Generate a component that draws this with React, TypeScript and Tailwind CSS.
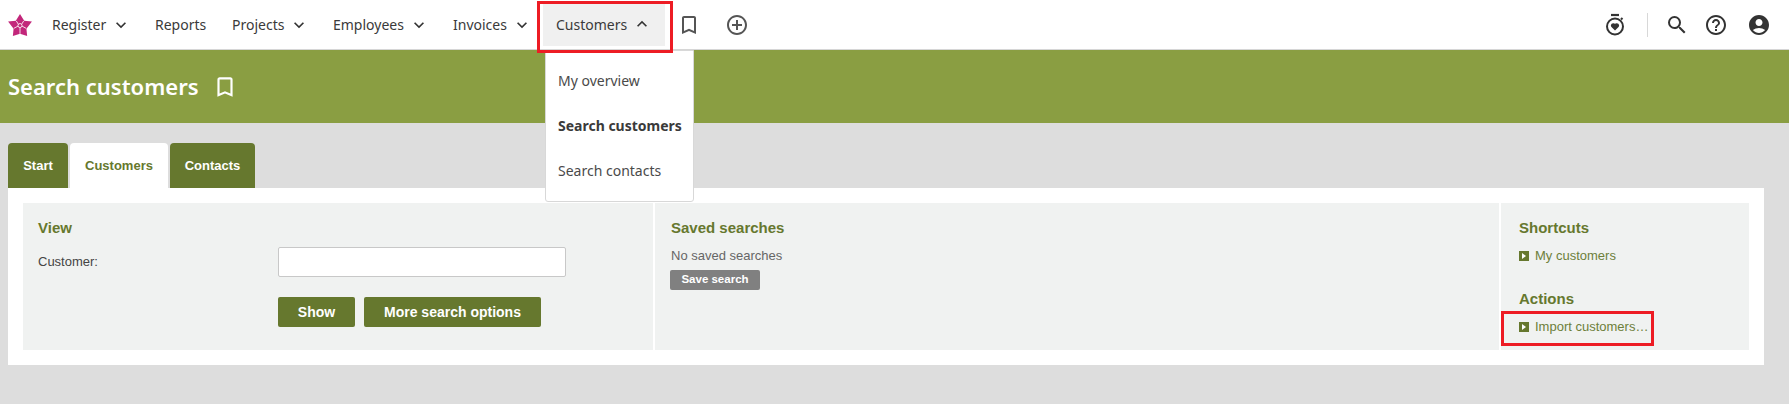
import { MdAccountCircle, MdAddCircleOutline, MdBookmarkBorder, MdExpandLess, MdExpandMore, MdHelpOutline, MdSearch } from 'react-icons/md'

const noto = "font-['Noto_Sans',sans-serif]"
const arial = "font-['Liberation_Sans',Arial,sans-serif]"

function Logo() {
  return (
    <svg width="24" height="22" viewBox="0 0 26 24" className="shrink-0">
      <path
        d="M13 0 L17.6 7.4 L26 8.2 L20 16 L20.8 24 L13 21.6 L5.2 24 L6 16 L0 8.2 L8.4 7.4 Z"
        fill="#c2267a"
      />
      <g stroke="#fff" strokeWidth="0.9" fill="none">
        <circle cx="13" cy="12.6" r="2.2" />
        <path d="M9 7.6 L11.2 11.2 M17 7.6 L14.8 11.2 M6.4 15.6 L10.8 13.2 M19.6 15.6 L15.2 13.2 M13 14.8 V21.6" />
      </g>
    </svg>
  )
}

function TimerHeart() {
  return (
    <svg width="20" height="24" viewBox="0 0 20 24" fill="none" stroke="#333" strokeWidth="2">
      <path d="M6 2 H14" strokeWidth="2.2" />
      <circle cx="10" cy="13.5" r="8" />
      <path d="M16 6.5 L17.5 5" />
      <path
        d="M10 17.6 L6.2 13.8 A2.4 2.4 0 0 1 9.6 10.6 L10 11 L10.4 10.6 A2.4 2.4 0 0 1 13.8 13.8 Z"
        fill="#333"
        stroke="none"
      />
    </svg>
  )
}

function NavItem({ label, caret, w }: { label: string; caret?: boolean; w: string }) {
  return (
    <div className={`flex items-center text-[14px] text-[#3a3a3a] ${w}`}>
      <span>{label}</span>
      {caret && <MdExpandMore size={20} className="ml-[5px] text-[#333]" />}
    </div>
  )
}

function ArrowLink({ label }: { label: string }) {
  return (
    <div className="flex items-center text-[13px] text-[#6d7f3a]">
      <span className="w-[10px] h-[10px] bg-[#66782e] flex items-center justify-center mr-[6px]">
        <span className="w-0 h-0 border-y-[3.5px] border-y-transparent border-l-[4px] border-l-white" />
      </span>
      {label}
    </div>
  )
}

export default function App() {
  return (
    <div className={`relative min-h-[404px] bg-[#dddddd] overflow-hidden ${arial}`}>
      {/* top bar */}
      <div className={`h-[50px] bg-white border-b border-[#d6d6d6] flex items-center ${noto}`}>
        <div className="pl-[8px] w-[52px]">
          <Logo />
        </div>
        <NavItem label="Register" caret w="w-[103px]" />
        <NavItem label="Reports" w="w-[77px]" />
        <NavItem label="Projects" caret w="w-[101px]" />
        <NavItem label="Employees" caret w="w-[120px]" />
        <NavItem label="Invoices" caret w="w-[90px]" />
        <div className="w-[122px] h-[44px] mt-[-1px] pl-[13px] bg-[#f0f0f0] flex items-center text-[14px] text-[#3a3a3a]">
          <span>Customers</span>
          <MdExpandLess size={20} className="ml-[5px] text-[#333]" />
        </div>
        <MdBookmarkBorder size={24} className="ml-[12px] text-[#555]" />
        <MdAddCircleOutline size={24} className="ml-[24px] text-[#555]" />
        <div className="ml-auto flex items-center pr-[18px] text-[#333]">
          <TimerHeart />
          <div className="w-[1px] h-[24px] bg-[#d8d8d8] ml-[22px] mr-[17px]" />
          <MdSearch size={24} />
          <MdHelpOutline size={24} className="ml-[15px]" />
          <MdAccountCircle size={24} className="ml-[19px]" />
        </div>
      </div>

      {/* page title */}
      <div className={`h-[73px] bg-[#8a9e42] flex items-center pl-[8px] text-white ${noto}`}>
        <span className="text-[22px] font-semibold">Search customers</span>
        <MdBookmarkBorder size={26} className="ml-[13px]" />
      </div>

      {/* tabs */}
      <div className="mt-[20px] mx-[8px] mr-[25px]">
        <div className="flex gap-[2px] text-[13px] font-bold">
          <div className="w-[60px] h-[45px] rounded-t-[4px] bg-[#66782e] text-white flex items-center justify-center">Start</div>
          <div className="w-[98px] h-[45px] rounded-t-[4px] bg-white text-[#66782e] flex items-center justify-center">Customers</div>
          <div className="w-[85px] h-[45px] rounded-t-[4px] bg-[#66782e] text-white flex items-center justify-center">Contacts</div>
        </div>

        <div className="bg-white p-[15px]">
          <div className="flex gap-[2px] h-[147px]">
            <div className="w-[630px] bg-[#f0f2f1] pt-[15px] pl-[15px]">
              <h3 className="text-[15px] leading-[20px] font-bold text-[#66782e]">View</h3>
              <div className="flex mt-[16px]">
                <label className="w-[240px] text-[13px] leading-[16px] text-[#444]">Customer:</label>
                <input className="w-[288px] h-[30px] -mt-[7px] bg-white border border-[#c8c8c8] rounded-[2px]" />
              </div>
              <div className="flex gap-[9px] ml-[240px] mt-[20px] text-[14px] font-bold text-white">
                <button className="w-[77px] h-[30px] rounded-[2px] bg-[#66782e]">Show</button>
                <button className="w-[177px] h-[30px] rounded-[2px] bg-[#66782e]">More search options</button>
              </div>
            </div>

            <div className="flex-1 bg-[#f0f2f1] pt-[15px] pl-[16px]">
              <h3 className="text-[15px] leading-[20px] font-bold text-[#66782e]">Saved searches</h3>
              <p className="mt-[10px] text-[13px] leading-[16px] text-[#666]">No saved searches</p>
              <button className="mt-[6px] w-[90px] h-[20px] -ml-[1px] rounded-[2px] bg-[#808080] text-[11.5px] font-bold text-white">Save search</button>
            </div>

            <div className="w-[248px] bg-[#f0f2f1] pt-[15px] pl-[18px]">
              <h3 className="text-[15px] leading-[20px] font-bold text-[#66782e]">Shortcuts</h3>
              <div className="mt-[8px] h-[16px]">
                <ArrowLink label="My customers" />
              </div>
              <h3 className="mt-[27px] text-[15px] leading-[20px] font-bold text-[#66782e]">Actions</h3>
              <div className="mt-[8px] h-[16px]">
                <ArrowLink label="Import customers…" />
              </div>
            </div>
          </div>
        </div>
      </div>

      {/* open menu */}
      <div className={`absolute left-[545px] top-[50px] w-[149px] h-[152px] bg-white border border-[#d8d8d8] rounded-b-[3px] flex flex-col pt-[7px] text-[14px] text-[#4a4a4a] ${noto}`}>
        <div className="h-[45px] pl-[12px] flex items-center">My overview</div>
        <div className="h-[45px] pl-[12px] flex items-center font-bold text-[#3a3a3a]">Search customers</div>
        <div className="h-[45px] pl-[12px] flex items-center">Search contacts</div>
      </div>

      {/* annotation boxes */}
      <div className="absolute left-[537px] top-[1px] w-[136px] h-[52px] border-[3px] border-[#ed1c24]" />
      <div className="absolute left-[1501px] top-[311px] w-[153px] h-[35px] border-[3px] border-[#ed1c24]" />
    </div>
  )
}
